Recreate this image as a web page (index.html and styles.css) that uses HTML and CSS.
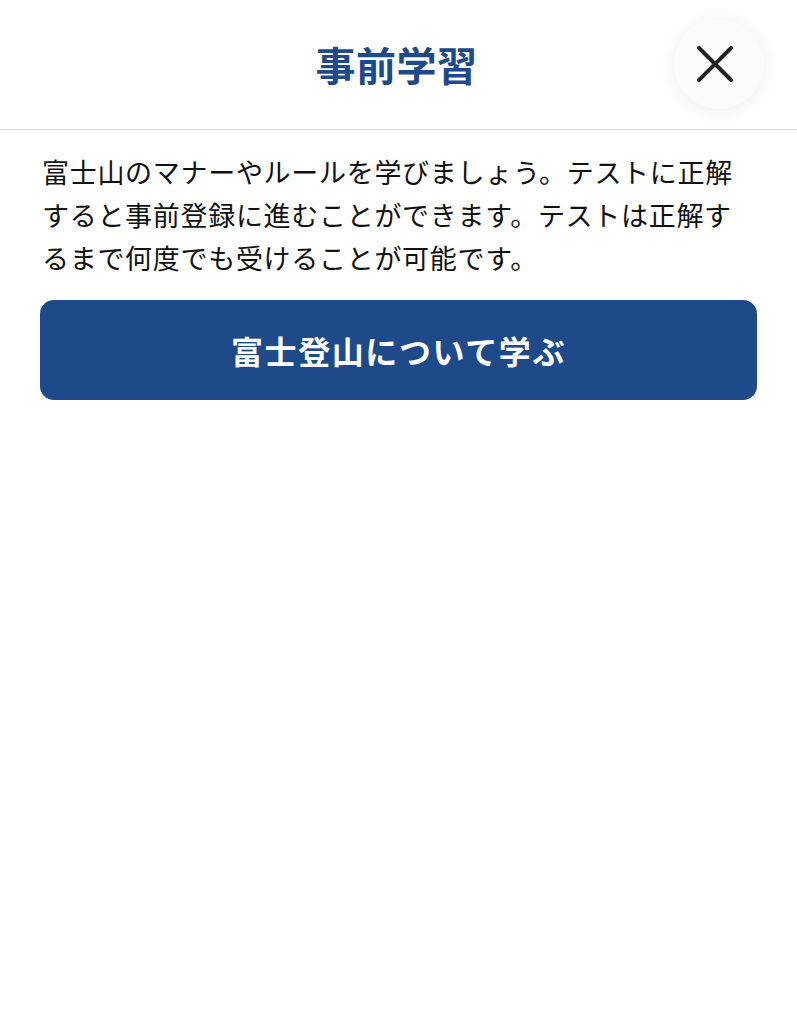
FILE: index.html
```html
<!DOCTYPE html>
<html lang="ja">
<head>
<meta charset="utf-8">
<link rel="stylesheet" href="styles.css">
</head>
<body>
<header class="header">
  <h1 class="title">事前学習</h1>
  <button class="close" aria-label="閉じる">
    <svg width="36" height="36" viewBox="0 0 36 36"><path d="M2 2 L34 34 M34 2 L2 34" stroke="#222" stroke-width="4" stroke-linecap="square" fill="none"/></svg>
  </button>
</header>
<main class="content">
  <p class="lead">富士山のマナーやルールを学びましょう。テストに正解すると事前登録に進むことができます。テストは正解するまで何度でも受けることが可能です。</p>
  <a class="btn" href="#">富士登山について学ぶ</a>
</main>
</body>
</html>
```
FILE: styles.css
```css
html, body {
  margin: 0;
  padding: 0;
  background: #fff;
  font-family: "Noto Sans CJK JP", "Noto Sans", sans-serif;
}
.header {
  position: relative;
  height: 129px;
  border-bottom: 1px solid #d4d4d4;
  display: flex;
  align-items: center;
  justify-content: center;
}
.title {
  margin: 0;
  font-size: 40px;
  font-weight: 700;
  color: #1e4a8a;
  line-height: 1;
  letter-spacing: 0.5px;
  transform: translate(-2px, -1px);
}
.close {
  position: absolute;
  left: 674px;
  top: 19px;
  width: 90px;
  height: 90px;
  border-radius: 50%;
  border: none;
  background: #fbfbfb;
  box-shadow: 0 2px 18px rgba(0,0,0,0.07);
  display: flex;
  align-items: center;
  justify-content: center;
  padding: 0 8px 0 0;
  cursor: pointer;
}
.content {
  padding: 20px 40px 0 42px;
  display: flex;
  flex-direction: column;
}
.lead {
  margin: 0 0 21px;
  font-size: 27px;
  line-height: 43px;
  letter-spacing: 0.7px;
  color: #111;
}
.btn {
  margin-left: -2px;
  height: 100px;
  border-radius: 14px;
  background: #1e4a8a;
  color: #fff;
  font-size: 32px;
  font-weight: 700;
  letter-spacing: 1.6px;
  text-decoration: none;
  display: flex;
  align-items: center;
  justify-content: center;
}
```
